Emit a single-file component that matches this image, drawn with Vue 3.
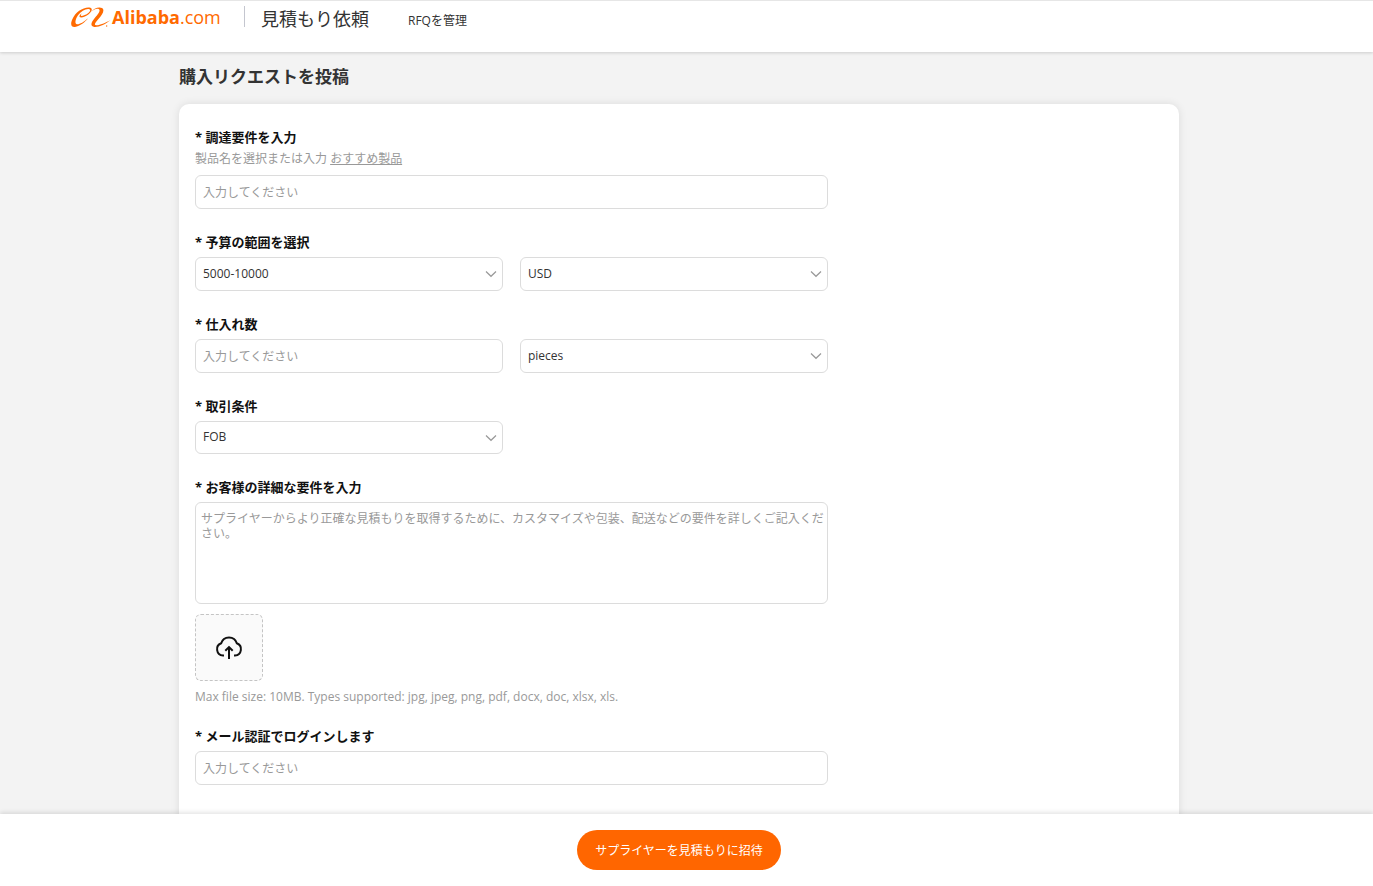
<script setup>
import { ref } from 'vue'

const product = ref('')
const budget = ref('5000-10000')
const currency = ref('USD')
const quantity = ref('')
const unit = ref('pieces')
const terms = ref('FOB')
const details = ref('')
const email = ref('')
</script>

<template>
  <div class="page">
    <header class="header">
      <div class="header-inner">
        <a class="logo" href="#" aria-label="Alibaba.com">
          <svg class="mark" viewBox="0 0 120 63" aria-hidden="true">
            <path d="M58 2C40 -2 13 14 4 37C-3 53 1 61 12 60C27 58 43 45 51 34C38 46 25 53 18 52C10 50 13 37 21 25C30 12 43 5 53 6C60 7 58 13 52 18C46 23 37 27 30 27C29 24 31 21 33 19C28 22 24 27 26 30C30 34 44 29 53 22C62 15 66 5 58 2Z" />
            <path d="M60 16C67 4 84 -2 93 3C103 9 93 24 83 35C75 44 69 51 73 54C80 58 100 49 118 40C105 51 84 61 70 60C57 58 60 47 69 36C79 24 90 12 84 7C78 3 67 8 60 16Z" />
            <circle cx="107" cy="57" r="2" />
          </svg>
          <span class="wordmark"><b>Alibaba</b>.com</span>
        </a>
        <span class="divider"></span>
        <span class="section">見積もり依頼</span>
        <a class="manage" href="#">RFQを管理</a>
      </div>
    </header>

    <main class="main">
      <div class="content">
        <h1 class="title">購入リクエストを投稿</h1>
        <form id="rfq" class="card" @submit.prevent>
          <div class="field">
            <label class="label" for="product">* 調達要件を入力</label>
            <p class="hint">製品名を選択または入力 <a href="#">おすすめ製品</a></p>
            <input id="product" v-model="product" class="control" type="text" placeholder="入力してください" />
          </div>

          <div class="field">
            <label class="label" for="budget">* 予算の範囲を選択</label>
            <div class="row">
              <div class="select">
                <select id="budget" v-model="budget" class="control">
                  <option>5000-10000</option>
                </select>
                <svg class="chevron" viewBox="0 0 12 8" aria-hidden="true"><path d="M1 1.5L6 6.3L11 1.5" /></svg>
              </div>
              <div class="select">
                <select v-model="currency" class="control" aria-label="通貨">
                  <option>USD</option>
                </select>
                <svg class="chevron" viewBox="0 0 12 8" aria-hidden="true"><path d="M1 1.5L6 6.3L11 1.5" /></svg>
              </div>
            </div>
          </div>

          <div class="field">
            <label class="label" for="quantity">* 仕入れ数</label>
            <div class="row">
              <input id="quantity" v-model="quantity" class="control" type="text" placeholder="入力してください" />
              <div class="select">
                <select v-model="unit" class="control" aria-label="単位">
                  <option>pieces</option>
                </select>
                <svg class="chevron" viewBox="0 0 12 8" aria-hidden="true"><path d="M1 1.5L6 6.3L11 1.5" /></svg>
              </div>
            </div>
          </div>

          <div class="field">
            <label class="label" for="terms">* 取引条件</label>
            <div class="row">
              <div class="select">
                <select id="terms" v-model="terms" class="control terms">
                  <option>FOB</option>
                </select>
                <svg class="chevron" viewBox="0 0 12 8" aria-hidden="true"><path d="M1 1.5L6 6.3L11 1.5" /></svg>
              </div>
            </div>
          </div>

          <div class="field">
            <label class="label" for="details">* お客様の詳細な要件を入力</label>
            <textarea
              id="details"
              v-model="details"
              class="control details"
              placeholder="サプライヤーからより正確な見積もりを取得するために、カスタマイズや包装、配送などの要件を詳しくご記入ください。"
            ></textarea>
            <button class="upload" type="button" aria-label="ファイルをアップロード">
              <svg viewBox="0 0 28 28" aria-hidden="true">
                <path d="M9 21.500H8A6.300 6.300 0 0 1 6.200 9.300A8.100 8.100 0 0 1 21.800 9.300A6.300 6.300 0 0 1 20 21.500H19" />
                <path d="M14 25V13.500M10.300 16.800L14 13.100L17.700 16.800" />
              </svg>
            </button>
            <p class="caption">Max file size: 10MB. Types supported: jpg, jpeg, png, pdf, docx, doc, xlsx, xls.</p>
          </div>

          <div class="field">
            <label class="label" for="email">* メール認証でログインします</label>
            <input id="email" v-model="email" class="control" type="email" placeholder="入力してください" />
          </div>
        </form>
      </div>
    </main>

    <footer class="footer">
      <button class="submit" type="submit" form="rfq">サプライヤーを見積もりに招待</button>
    </footer>
  </div>
</template>

<style>
body {
  margin: 0;
}
</style>

<style scoped>
.page {
  box-sizing: border-box;
  display: flex;
  flex-direction: column;
  height: 100vh;
  background: #f3f3f3;
  color: #333;
  font-family: "Open Sans", "Noto Sans CJK JP", sans-serif;
  font-size: 12px;
  line-height: 20px;
}
.page *,
.page *::before {
  box-sizing: border-box;
}
.header {
  position: relative;
  z-index: 1;
  flex: none;
  height: 52px;
  padding-right: 15px;
  border-top: 1px solid #e6e6e6;
  background: #fff;
  box-shadow: 0 1px 3px rgba(0, 0, 0, 0.16);
}
.header-inner {
  display: flex;
  max-width: 1216px;
  height: 38px;
  margin: 0 auto;
  align-items: center;
}
.logo {
  display: flex;
  width: 152px;
  margin-bottom: 6px;
  align-items: center;
  color: #ff6a00;
  text-decoration: none;
}
.mark {
  flex: none;
  width: 40px;
  height: 21px;
  margin-right: 1px;
  fill: #ff6a00;
}
.wordmark {
  font-size: 18px;
  line-height: 24px;
}
.wordmark b {
  font-weight: 700;
}
.divider {
  width: 1px;
  height: 21px;
  margin: 0 16px 8px 21px;
  background: #c4c6cf;
}
.section {
  margin-bottom: 2px;
  font-size: 18px;
  line-height: 24px;
}
.manage {
  margin-top: 2px;
  margin-left: 39px;
  color: #333;
  text-decoration: none;
}
.main {
  flex: 1;
  min-height: 0;
  padding-right: 15px;
  overflow-y: auto;
  scrollbar-width: none;
}
.content {
  max-width: 1000px;
  margin: 0 auto;
}
.title {
  margin: 0;
  padding: 13px 0 15px;
  font-size: 17px;
  font-weight: 700;
  line-height: 24px;
}
.card {
  padding: 23px 16px 80px;
  border-radius: 10px;
  background: #fff;
  box-shadow: 0 0 8px rgba(0, 0, 0, 0.1);
}
.field {
  display: flex;
  flex-direction: column;
  max-width: 633px;
  margin-bottom: 23px;
}
.label {
  margin-bottom: 5px;
  color: #111;
  font-size: 13px;
  font-weight: 700;
}
.hint {
  margin: -3px 0 6px;
  color: #999;
}
.hint a {
  color: #999;
  text-decoration: underline;
}
.row {
  display: grid;
  grid-template-columns: 1fr 1fr;
  gap: 17px;
}
.control {
  width: 100%;
  height: 34px;
  margin: 0;
  padding: 0 7px;
  border: 1px solid #dcdcdc;
  border-radius: 6px;
  outline: none;
  background: #fff;
  color: #333;
  font-family: inherit;
  font-size: 12px;
}
.control::placeholder {
  color: #999;
  opacity: 1;
}
.select {
  display: grid;
}
.select > * {
  grid-area: 1 / 1;
}
select.control {
  padding-bottom: 2px;
  appearance: none;
}
select.terms {
  height: 33px;
}
.chevron {
  width: 12px;
  height: 8px;
  margin-right: 6px;
  align-self: center;
  justify-self: end;
  fill: none;
  stroke: #999;
  stroke-width: 1.2;
  pointer-events: none;
}
.details {
  height: 102px;
  padding: 8px 0 8px 5px;
  line-height: 15px;
  resize: none;
}
.upload {
  display: flex;
  width: 68px;
  height: 67px;
  margin-top: 10px;
  padding: 0;
  align-items: center;
  justify-content: center;
  border: 1px dashed #c4c4c4;
  border-radius: 6px;
  background: #fafafa;
}
.upload svg {
  width: 28px;
  height: 28px;
  fill: none;
  stroke: #111;
  stroke-width: 2;
}
.caption {
  margin: 6px 0 -4px;
  color: #999;
}
.footer {
  position: relative;
  z-index: 1;
  display: flex;
  flex: none;
  height: 72px;
  padding-right: 15px;
  align-items: center;
  justify-content: center;
  background: #fff;
  box-shadow: 0 -2px 4px rgba(0, 0, 0, 0.1);
}
.submit {
  height: 40px;
  padding: 0 18px;
  border: 0;
  border-radius: 20px;
  background: #ff6600;
  color: #fff;
  font-family: inherit;
  font-size: 12px;
}
</style>
